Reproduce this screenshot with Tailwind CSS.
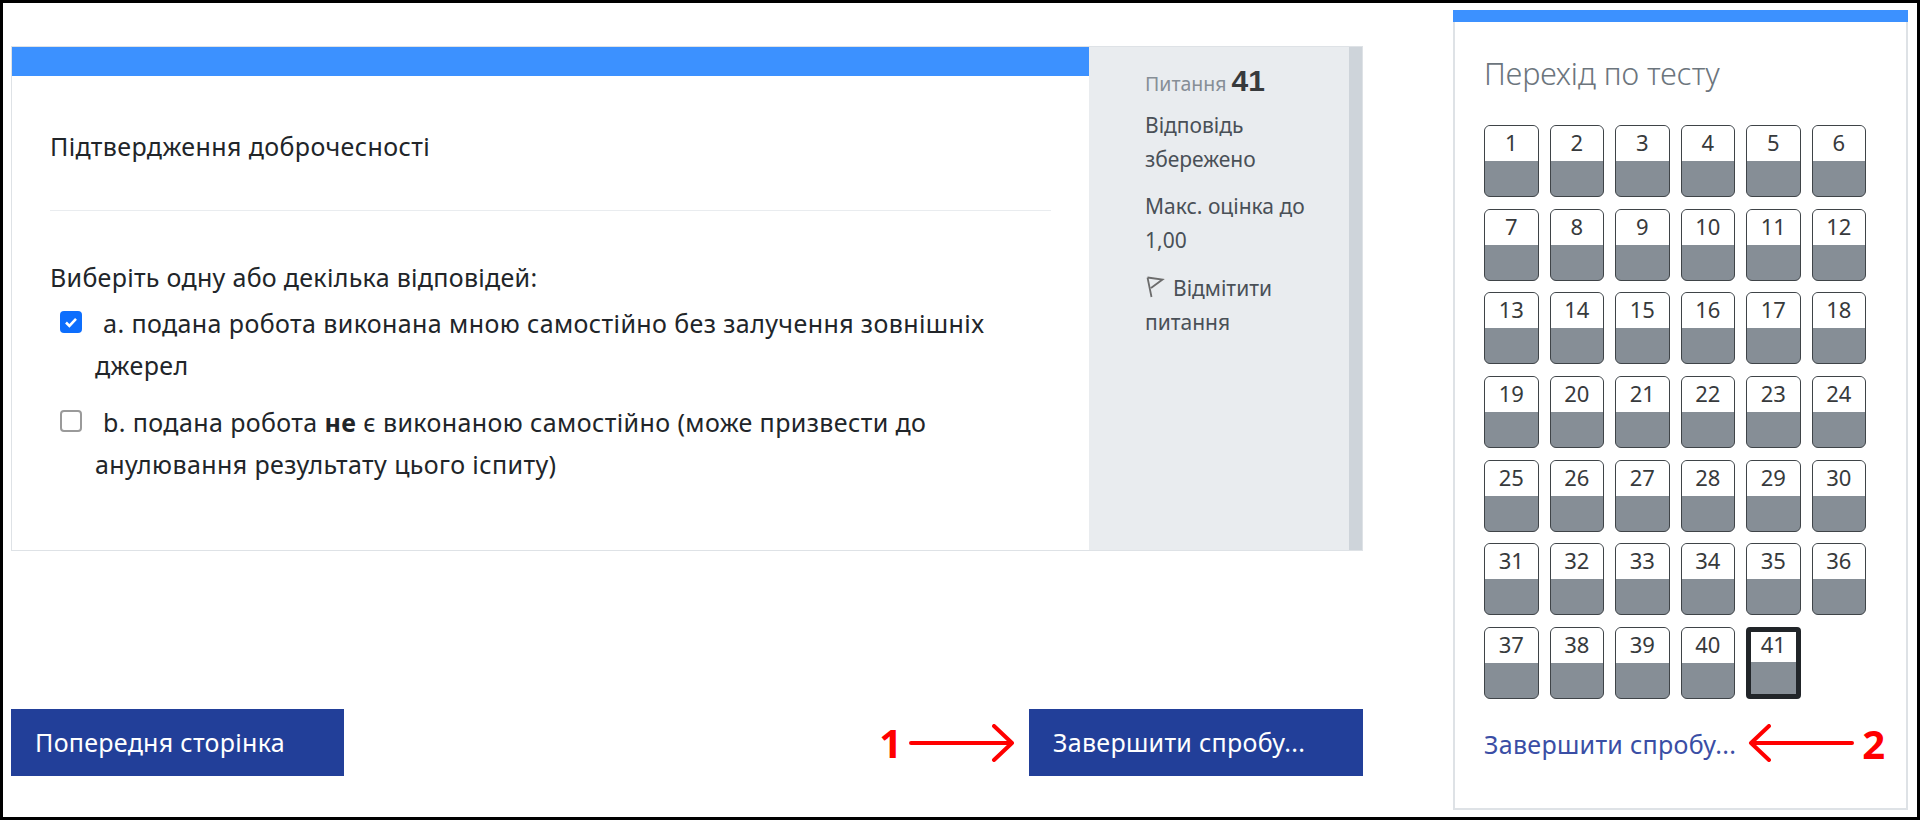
<!DOCTYPE html>
<html lang="uk">
<head>
    <meta charset="UTF-8">
    <meta name="viewport" content="width=device-width, initial-scale=1.0">
    <title>Підтвердження доброчесності</title>
    <script src="https://cdn.jsdelivr.net/npm/@tailwindcss/browser@4"></script>
</head>
<body class="bg-white font-['Noto_Sans','Open_Sans',sans-serif] text-[#212529]">
    <div class="h-[820px] w-[1920px] border-[3px] border-black flex overflow-hidden">

        <!-- question column -->
        <div class="w-[1352px] ml-[8px] pt-[43px] flex flex-col">
            <div class="h-[505px] flex border border-[#dee2e6]">
                <div class="w-[1077px] flex flex-col">
                    <div class="h-[29px] bg-[#3c91ff]"></div>
                    <div class="px-[38px]">
                        <p class="h-[135px] pt-[54px] text-[25px] tracking-[0.4px] leading-[32px] border-b border-[#e9ecef]">Підтвердження доброчесності</p>
                        <p class="mt-[50px] text-[25px] tracking-[0.3px] leading-[32px]">Виберіть одну або декілька відповідей:</p>
                        <div class="mt-[9px] flex flex-col gap-[15px] text-[25px] tracking-[0.4px] leading-[42px]">
                            <div class="pl-[45px] relative">
                                <span class="absolute left-[10px] top-[9px] w-[22px] h-[22px] rounded-[4px] bg-[#0d6efd] flex items-center justify-center">
                                    <svg width="16" height="16" viewBox="0 0 16 16" fill="none"><path d="M3 8.5l3.4 3.4L13 4.8" stroke="#fff" stroke-width="2.6"/></svg>
                                </span>
                                <span class="ml-[8px]">a. подана робота виконана мною самостійно без залучення зовнішніх джерел</span>
                            </div>
                            <div class="pl-[45px] relative">
                                <span class="absolute left-[10px] top-[9px] w-[22px] h-[22px] rounded-[4px] bg-white border-2 border-[#9a9a9a]"></span>
                                <span class="ml-[8px]">b. подана робота <b>не</b> є виконаною самостійно (може призвести до анулювання результату цього іспиту)</span>
                            </div>
                        </div>
                    </div>
                </div>
                <div class="flex-1 flex bg-[#e9ecef]">
                    <div class="w-[260px] pl-[56px] pr-[24px] pt-[17px] text-[21px] leading-[34px] text-[#495057]">
                        <p class="h-[40px] text-[19.5px] text-[#868e96]">Питання <b class="font-['Liberation_Sans',sans-serif] text-[30px] text-[#373a3c]">41</b></p>
                        <p class="mt-[4px]">Відповідь збережено</p>
                        <p class="mt-[13px]">Макс. оцінка до 1,00</p>
                        <p class="mt-[14px]">
                            <svg class="inline-block align-[-3px] mr-[8px]" width="20" height="24" viewBox="0 0 20 24" fill="none"><path d="M2.5 2.5L6.5 22M2.5 2.5L17.5 4.5L6 13" stroke="#6c6c6c" stroke-width="1.8"/></svg>Відмітити питання
                        </p>
                    </div>
                    <div class="flex-1 bg-[#ced4da]"></div>
                </div>
            </div>

            <div class="mt-[158px] flex items-center">
                <a class="w-[333px] h-[67px] bg-[#223f99] text-white text-[25px] tracking-[0.3px] pl-[24px] flex items-center">Попередня сторінка</a>
                <div class="ml-auto mr-[14px] flex items-center gap-[7px]">
                    <span class="font-['Open_Sans',sans-serif] font-bold text-[40px] leading-[38px] text-[#ff0000]">1</span>
                    <svg width="106" height="38" viewBox="0 0 106 38" fill="none"><path d="M2 19H103M85 2L103 19L85 36" stroke="#ff0000" stroke-width="4" stroke-linecap="round" stroke-linejoin="round"/></svg>
                </div>
                <a class="w-[334px] h-[67px] bg-[#223f99] text-white text-[25px] tracking-[0.3px] pl-[24px] flex items-center">Завершити спробу...</a>
            </div>
        </div>

        <!-- quiz navigation -->
        <div class="w-[455px] h-[800px] ml-[90px] mt-[7px] border-2 border-t-0 border-[#dee2e6] flex flex-col">
            <div class="h-[12px] -mx-[2px] bg-[#3c91ff]"></div>
            <div class="pl-[29px] pt-[29px]">
                <h2 class="text-[30.5px] font-light leading-[44px] text-[#6c757d]">Перехід по тесту</h2>
                <div id="nav" class="mt-[30px] grid grid-cols-[repeat(6,54.5px)] gap-x-[11px] gap-y-[11.67px]"></div>
                <div class="mt-[20.5px] flex items-center">
                    <a class="text-[25px] tracking-[0.3px] leading-[50px] text-[#3a4ea5]">Завершити спробу...</a>
                    <svg class="ml-[12px] mb-[2px]" width="106" height="38" viewBox="0 0 106 38" fill="none"><path d="M104 19H3M21 2L3 19L21 36" stroke="#ff0000" stroke-width="4" stroke-linecap="round" stroke-linejoin="round"/></svg>
                    <span class="ml-[8px] font-['Open_Sans',sans-serif] font-bold text-[40px] leading-[38px] text-[#ff0000]">2</span>
                </div>
            </div>
        </div>
    </div>

    <script>
        const nav = document.getElementById('nav');
        for (let i = 1; i <= 41; i++) {
            const box = i === 41 ? 'border-[5px] border-[#212529] rounded-[4px]' : 'border-[1.5px] border-[#3f4448] rounded-[6px]';
            const top = i === 41 ? 'h-[30px] leading-[25px]' : 'h-[35px] leading-[33px]';
            nav.insertAdjacentHTML('beforeend',
                `<div class="h-[72px] bg-[#868e96] overflow-hidden ${box}">
                    <div class="${top} bg-white text-center text-[22px] text-[#373a3c]">${i}</div>
                </div>`);
        }
    </script>
</body>
</html>
